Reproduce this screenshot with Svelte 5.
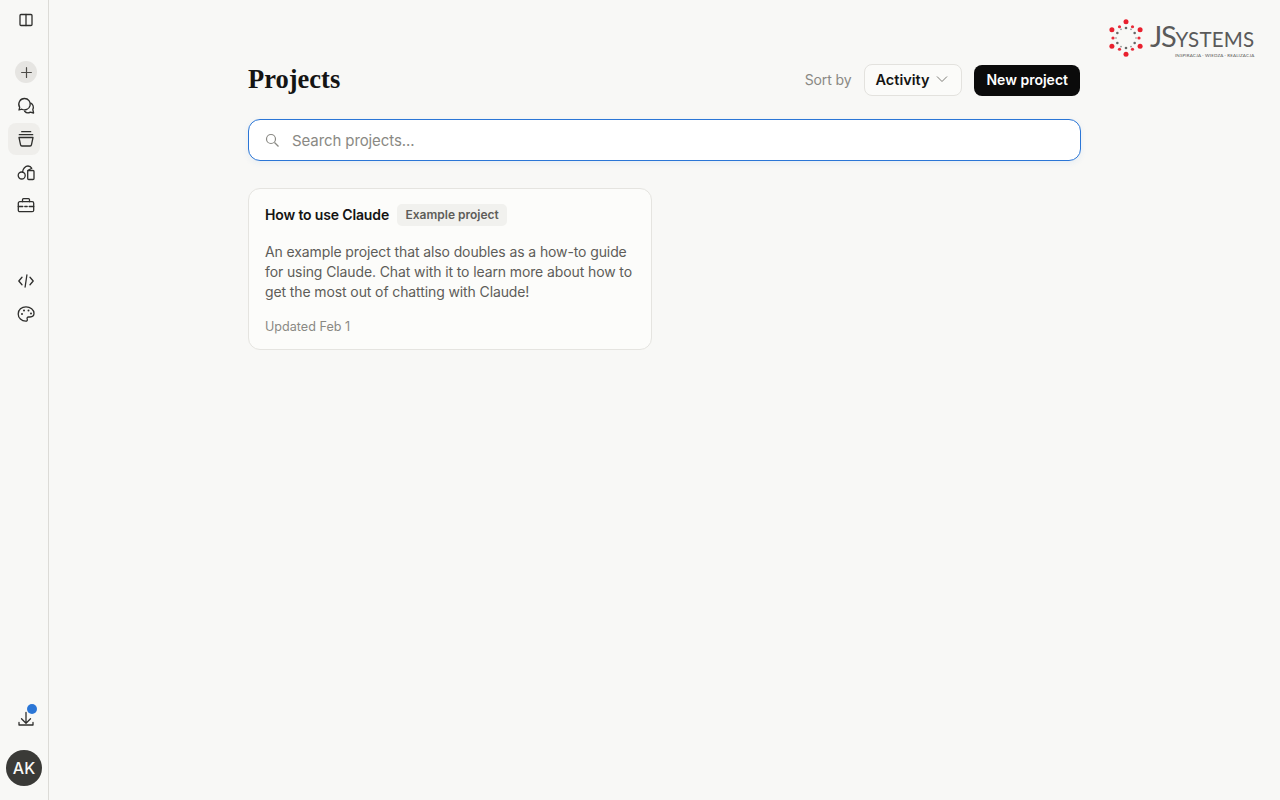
<script>
  const outer = [0, 60, 120, 180, 240, 300];
  const middle = [30, 90, 150, 210, 270, 330];
  const pos = (deg, r) => ({
    x: 18 + r * Math.sin((deg * Math.PI) / 180),
    y: 20 - r * Math.cos((deg * Math.PI) / 180)
  });
</script>

<div class="app">
  <nav class="sidebar">
    <div class="nav-top">
      <button class="icon-btn" aria-label="Toggle sidebar">
        <svg viewBox="0 0 20 20"><rect x="4" y="4.5" width="12" height="11" rx="1" /><path d="M10 4.5v11" /></svg>
      </button>
      <div class="nav-main">
        <button class="icon-btn" aria-label="New chat">
          <span class="plus">
            <svg viewBox="0 0 20 20"><path d="M10 3.5v13M3.5 10h13" /></svg>
          </span>
        </button>
        <button class="icon-btn" aria-label="Chats">
          <svg viewBox="0 0 20 20">
            <path d="M8.5 2.5a5.7 5.7 0 1 1-2.7 10.7L3 14l.7-2.7A5.7 5.7 0 0 1 8.5 2.5z" />
            <path d="M14.8 7.2a4.6 4.6 0 0 1 2 6.3l.8 3.5-3.3-.9a4.6 4.6 0 0 1-5.7-.9" />
          </svg>
        </button>
        <button class="icon-btn active" aria-label="Projects">
          <svg viewBox="0 0 20 20">
            <path d="M5.7 2.7h9M3.3 5.7h13.4" />
            <path d="M3 8.5h14l-1.5 7.2a1.5 1.5 0 0 1-1.5 1.3H6a1.5 1.5 0 0 1-1.5-1.3z" />
          </svg>
        </button>
        <button class="icon-btn" aria-label="Artifacts">
          <svg viewBox="0 0 20 20">
            <circle cx="5.7" cy="12.5" r="3.5" />
            <rect x="11.7" y="7.5" width="6.3" height="9" rx="1" />
            <path d="M6.5 9C6.8 5.5 9.5 3 12 3c1.5 0 3 .8 3.8 2.2L11.7 7.5" />
          </svg>
        </button>
        <button class="icon-btn" aria-label="Tools">
          <svg viewBox="0 0 20 20">
            <rect x="2.3" y="5.7" width="15.4" height="10" rx="1.5" />
            <path d="M6.5 5.7v-2a1 1 0 0 1 1-1h5a1 1 0 0 1 1 1v2" />
            <path d="M2.3 10.5h4.5M8.800 10.5h2.4M13.2 10.5h4.5" />
          </svg>
        </button>
      </div>
      <div class="nav-extra">
        <button class="icon-btn" aria-label="Code">
          <svg viewBox="0 0 20 20"><path d="M6 6.3L2.8 10 6 13.7M14 6.3l3.2 3.7-3.2 3.7M10.9 4L9.100 16" /></svg>
        </button>
        <button class="icon-btn" aria-label="Design">
          <svg viewBox="0 0 20 20">
            <path d="M10 2.8c4.4 0 8 2.9 8 6.5 0 2.5-2 3.7-4 3.7h-1.5c-1.1 0-1.8 1-1.3 2 .5 1.2-.2 2.2-1.5 2.2-4.1 0-7.5-3.3-7.500-7.300S5.600 2.800 10 2.800z" />
            <circle class="dot" cx="6" cy="10" r="1" />
            <circle class="dot" cx="8" cy="6.5" r="1" />
            <circle class="dot" cx="12.5" cy="6.5" r="1" />
            <circle class="dot" cx="15" cy="9.5" r="1" />
          </svg>
        </button>
      </div>
    </div>
    <div class="nav-bottom">
      <button class="icon-btn" aria-label="Download">
        <svg viewBox="0 0 20 20"><path d="M10 3.5V14M5.5 9.8l4.5 4.5 4.5-4.500M3 13.5V16h14v-2.500" /></svg>
        <span class="badge"></span>
      </button>
      <div class="avatar">AK</div>
    </div>
  </nav>

  <main class="main">
    <div class="content">
      <header class="head">
        <h1>Projects</h1>
        <div class="actions">
          <span class="sort-label">Sort by</span>
          <button class="sort">
            Activity
            <svg viewBox="0 0 14 14"><path d="M2 4.5l5 5 5-5" /></svg>
          </button>
          <button class="new">New project</button>
        </div>
      </header>

      <label class="search">
        <svg viewBox="0 0 16 16"><circle cx="7" cy="7" r="4.5" /><path d="M10.5 10.5l4 4" /></svg>
        <input type="text" placeholder="Search projects..." />
      </label>

      <div class="grid">
        <article class="card">
          <div class="card-title">
            <h2>How to use Claude</h2>
            <span class="tag">Example project</span>
          </div>
          <p>An example project that also doubles as a how-to guide for using Claude. Chat with it to learn more about how to get the most out of chatting with Claude!</p>
          <div class="updated">Updated Feb 1</div>
        </article>
      </div>
    </div>
  </main>

  <div class="logo">
    <svg class="logo-mark" viewBox="0 0 36 40">
      {#each outer as d}
        <circle cx={pos(d, 16.3).x} cy={pos(d, 16.3).y} r="2.5" fill="#e9202e" />
        <circle cx={pos(d, 10).x} cy={pos(d, 10).y} r="1.3" fill="#666" />
      {/each}
      {#each middle as d}
        <circle cx={pos(d, 13).x} cy={pos(d, 13).y} r="1.6" fill="#e92c3a" />
        <circle cx={pos(d, 10).x} cy={pos(d, 10).y} r="0.8" fill="#888" />
      {/each}
    </svg>
    <div class="logo-text">
      <div class="logo-name"><span class="big">JS</span>YSTEMS</div>
      <div class="logo-sub">INSPIRACJA · WIEDZA · REALIZACJA</div>
    </div>
  </div>
</div>

<style>
  :global(body) {
    margin: 0;
    background: #f8f8f6;
    font-family: Inter, "Noto Sans", sans-serif;
    color: #141413;
  }

  button {
    font: inherit;
    border: 0;
    background: none;
    padding: 0;
    cursor: pointer;
  }

  .app {
    display: flex;
    min-height: 800px;
    position: relative;
  }

  .sidebar {
    width: 48px;
    height: 800px;
    border-right: 1px solid #dcdbd7;
    display: flex;
    flex-direction: column;
    justify-content: space-between;
    align-items: center;
    flex-shrink: 0;
  }

  .nav-top {
    display: flex;
    flex-direction: column;
    align-items: center;
    padding-top: 4px;
  }

  .nav-main {
    display: flex;
    flex-direction: column;
    gap: 1.5px;
    margin-top: 20px;
  }

  .nav-extra {
    display: flex;
    flex-direction: column;
    gap: 1.33px;
    margin-top: 43px;
  }

  .icon-btn {
    width: 32px;
    height: 32px;
    border-radius: 8px;
    padding-left: 4px;
    display: flex;
    align-items: center;
    justify-content: center;
    position: relative;
  }

  .icon-btn svg {
    width: 20px;
    height: 20px;
    fill: none;
    stroke: #2f2f2d;
    stroke-width: 1.3;
    stroke-linejoin: round;
    stroke-linecap: round;
  }

  .icon-btn .dot {
    fill: #2f2f2d;
    stroke: none;
  }

  .icon-btn.active {
    background: #efeeeb;
  }

  .plus {
    width: 22px;
    height: 22px;
    flex-shrink: 0;
    border-radius: 50%;
    background: #e6e5e2;
    display: flex;
    align-items: center;
    justify-content: center;
  }

  .icon-btn .plus svg {
    width: 15px;
    height: 15px;
    stroke: #4d4c48;
    stroke-width: 1.6;
  }

  .nav-bottom {
    display: flex;
    flex-direction: column;
    align-items: center;
    gap: 15px;
    padding-bottom: 14px;
  }

  .badge {
    position: absolute;
    top: 1px;
    right: 3px;
    width: 10px;
    height: 10px;
    border-radius: 50%;
    background: #2b76d6;
  }

  .avatar {
    width: 36px;
    height: 36px;
    border-radius: 50%;
    background: #3a3a37;
    color: #f8f8f6;
    font-size: 16px;
    font-weight: 500;
    display: flex;
    align-items: center;
    justify-content: center;
  }

  .main {
    flex: 1;
    display: flex;
    justify-content: center;
    padding-right: 1px;
  }

  .content {
    width: 832px;
    padding-top: 64px;
  }

  .head {
    display: flex;
    align-items: center;
    justify-content: space-between;
    height: 32px;
  }

  h1 {
    margin: 0;
    padding-bottom: 2px;
    font-family: "Liberation Serif", serif;
    font-size: 26.5px;
    font-weight: 700;
    line-height: 30px;
    color: #141413;
  }

  .actions {
    display: flex;
    align-items: center;
  }

  .sort-label {
    font-size: 14px;
    letter-spacing: -0.1px;
    color: #8a8984;
    margin-right: 12px;
    padding-bottom: 2px;
  }

  .sort {
    display: flex;
    align-items: center;
    gap: 6px;
    height: 32px;
    box-sizing: border-box;
    padding: 0 12px 2px 11px;
    border: 1px solid #e3e2de;
    border-radius: 8px;
    background: #fbfbf9;
    font-size: 14.5px;
    font-weight: 600;
    color: #141413;
    margin-right: 12px;
  }

  .sort svg {
    width: 14px;
    height: 14px;
    fill: none;
    stroke: #7d7c77;
    stroke-width: 1;
  }

  .new {
    height: 31px;
    margin-top: 1px;
    padding: 0 12px 2px;
    border-radius: 8px;
    background: #0b0b0b;
    color: #fff;
    font-size: 14px;
    font-weight: 600;
  }

  .search {
    display: flex;
    align-items: center;
    gap: 12px;
    margin: 23px -1px 0 0;
    height: 42px;
    box-sizing: border-box;
    padding: 0 15px;
    background: #fff;
    border: 1px solid #2b76d6;
    border-radius: 12px;
    box-shadow: 0 2px 6px rgba(43, 118, 214, 0.08);
  }

  .search svg {
    width: 16px;
    height: 16px;
    fill: none;
    stroke: #8a8984;
    stroke-width: 1.2;
    flex-shrink: 0;
  }

  .search input {
    flex: 1;
    padding: 0;
    border: 0;
    outline: 0;
    background: none;
    font: inherit;
    font-size: 15px;
    letter-spacing: -0.1px;
    color: #141413;
  }

  .search input::placeholder {
    color: #8a8984;
    opacity: 1;
  }

  .grid {
    display: grid;
    grid-template-columns: 404px;
    margin-top: 27px;
  }

  .card {
    border: 1px solid #e5e4e0;
    border-radius: 12px;
    background: #fcfcfa;
    padding: 15px 16px;
    height: 162px;
    box-sizing: border-box;
  }

  .card-title {
    display: flex;
    align-items: center;
    gap: 8px;
  }

  h2 {
    margin: 0;
    padding-bottom: 2px;
    font-size: 14px;
    font-weight: 600;
    letter-spacing: -0.15px;
    color: #141413;
  }

  .tag {
    font-size: 12px;
    line-height: 14px;
    font-weight: 600;
    color: #5e5d59;
    background: #f1f1ee;
    border-radius: 5px;
    padding: 4px 8.5px;
  }

  .card p {
    margin: 16px 0 0;
    font-size: 14px;
    line-height: 20px;
    letter-spacing: -0.11px;
    color: #5e5d59;
  }

  .updated {
    margin-top: 17px;
    font-size: 12.6px;
    color: #8a8984;
  }

  .logo {
    position: absolute;
    top: 18px;
    left: 1107.7px;
    display: flex;
    align-items: flex-start;
    gap: 6.3px;
  }

  .logo-mark {
    width: 36px;
    height: 40px;
    flex-shrink: 0;
  }

  .logo-text {
    padding-top: 4px;
    color: #5a5a5a;
    font-family: Lato, sans-serif;
  }

  .logo-name {
    font-size: 20.5px;
    line-height: 27px;
    letter-spacing: 0.2px;
    white-space: nowrap;
  }

  .logo-name .big {
    font-size: 29px;
    letter-spacing: -1.2px;
  }

  .logo-sub {
    font-size: 4.5px;
    line-height: 5px;
    text-align: right;
    letter-spacing: 0.15px;
    white-space: nowrap;
  }
</style>
